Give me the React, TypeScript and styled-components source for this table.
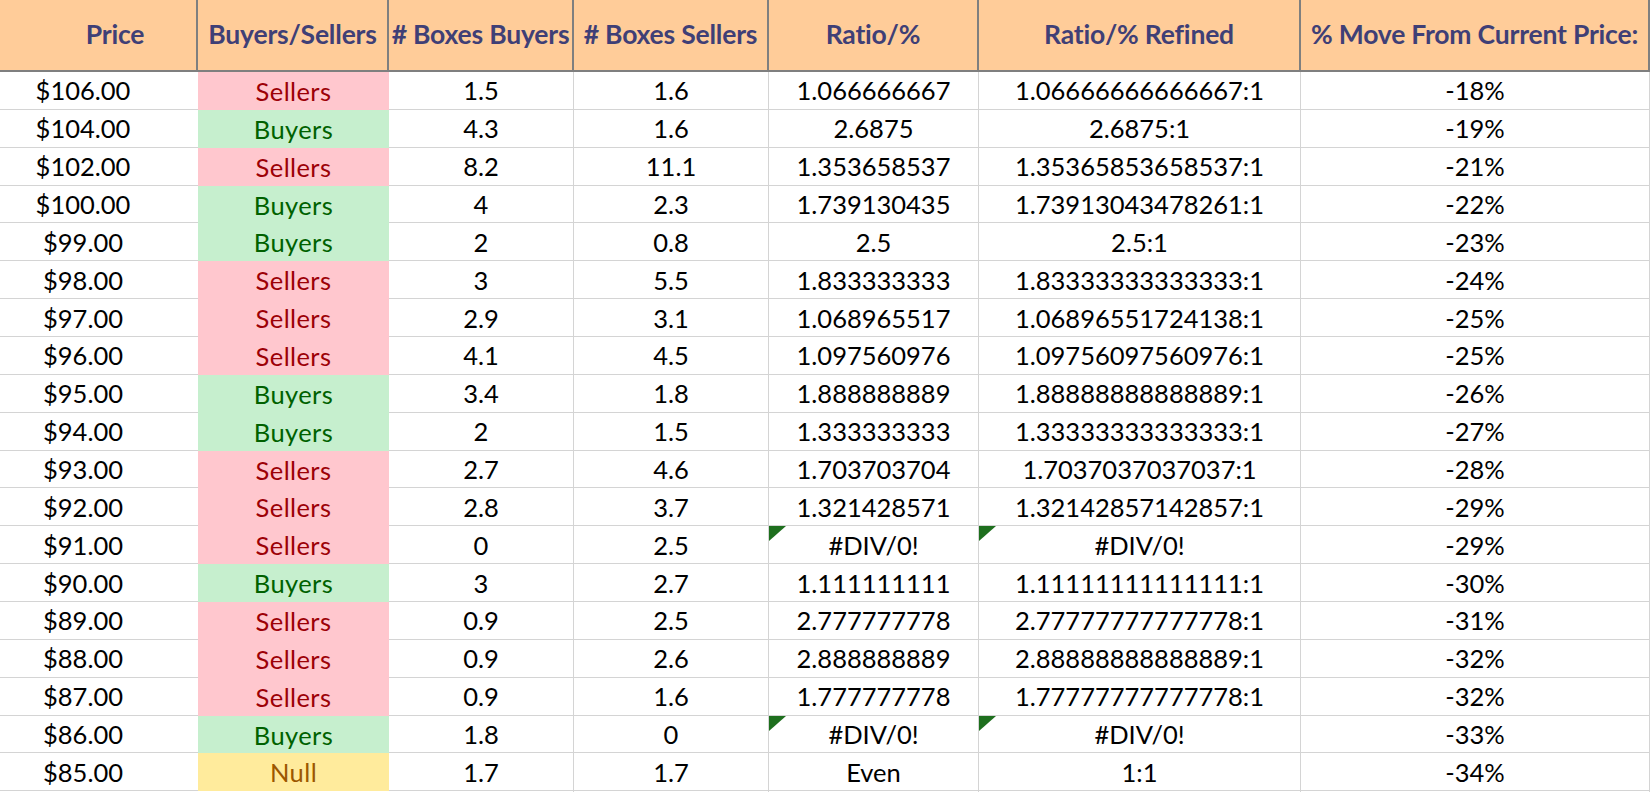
import React from "react";
import styled, { createGlobalStyle, css } from "styled-components";

const GlobalStyle = createGlobalStyle`
  html, body { margin: 0; padding: 0; background: #ffffff; }
  body { font-family: "Lato", "Noto Sans", sans-serif; overflow: hidden; }
`;

const COLS = "198px 191px 185px 195px 210px 322px 349px";

const Sheet = styled.div`
  width: 1650px;
  height: 792px;
  overflow: hidden;
  display: flex;
  flex-direction: column;
`;

const HeaderRow = styled.div`
  display: grid;
  grid-template-columns: ${COLS};
  height: 72px;
  background: #ffcc99;
  border-bottom: 2px solid #7f7f7f;
  box-sizing: border-box;
  flex: none;
`;

const HeaderCell = styled.div<{ $shift?: number }>`
  display: flex;
  align-items: center;
  justify-content: center;
  border-right: 2px solid #7f7f7f;
  box-sizing: border-box;
  color: #3f3f76;
  font-weight: 700;
  font-size: 26.5px;
  white-space: nowrap;
  letter-spacing: -0.2px;
  padding-bottom: 2px;
  padding-left: ${(p) => p.$shift ?? 0}px;
`;

const Body = styled.div`
  display: grid;
  grid-template-columns: ${COLS};
  grid-auto-rows: 37.87px;
`;

type Status = "Sellers" | "Buyers" | "Null";

const statusStyles: Record<Status, ReturnType<typeof css>> = {
  Sellers: css`background: #ffc7ce; color: #9c0006;`,
  Buyers: css`background: #c6efce; color: #006100;`,
  Null: css`background: #ffeb9c; color: #9c5700;`,
};

const Cell = styled.div<{ $noRight?: boolean; $padRight?: number }>`
  position: relative;
  display: flex;
  align-items: center;
  justify-content: center;
  box-sizing: border-box;
  border-bottom: 1px solid #d4d4d4;
  border-right: ${(p) => (p.$noRight ? "none" : "1px solid #d4d4d4")};
  padding-right: ${(p) => p.$padRight ?? 0}px;
  color: #000000;
  font-size: 25.5px;
  white-space: nowrap;
`;

const StatusCell = styled.div<{ $status: Status }>`
  display: flex;
  align-items: center;
  justify-content: center;
  box-sizing: border-box;
  font-size: 25.5px;
  letter-spacing: 0.4px;
  white-space: nowrap;
  ${(p) => statusStyles[p.$status]}
`;

const ErrorFlag = styled.span`
  position: absolute;
  top: 0;
  left: 0;
  width: 0;
  height: 0;
  border-top: 15px solid #1e6f1e;
  border-right: 17px solid transparent;
`;

type Row = [string, Status, string, string, string, string, string];

const rows: Row[] = [
  ["$106.00", "Sellers", "1.5", "1.6", "1.066666667", "1.06666666666667:1", "-18%"],
  ["$104.00", "Buyers", "4.3", "1.6", "2.6875", "2.6875:1", "-19%"],
  ["$102.00", "Sellers", "8.2", "11.1", "1.353658537", "1.35365853658537:1", "-21%"],
  ["$100.00", "Buyers", "4", "2.3", "1.739130435", "1.73913043478261:1", "-22%"],
  ["$99.00", "Buyers", "2", "0.8", "2.5", "2.5:1", "-23%"],
  ["$98.00", "Sellers", "3", "5.5", "1.833333333", "1.83333333333333:1", "-24%"],
  ["$97.00", "Sellers", "2.9", "3.1", "1.068965517", "1.06896551724138:1", "-25%"],
  ["$96.00", "Sellers", "4.1", "4.5", "1.097560976", "1.09756097560976:1", "-25%"],
  ["$95.00", "Buyers", "3.4", "1.8", "1.888888889", "1.88888888888889:1", "-26%"],
  ["$94.00", "Buyers", "2", "1.5", "1.333333333", "1.33333333333333:1", "-27%"],
  ["$93.00", "Sellers", "2.7", "4.6", "1.703703704", "1.7037037037037:1", "-28%"],
  ["$92.00", "Sellers", "2.8", "3.7", "1.321428571", "1.32142857142857:1", "-29%"],
  ["$91.00", "Sellers", "0", "2.5", "#DIV/0!", "#DIV/0!", "-29%"],
  ["$90.00", "Buyers", "3", "2.7", "1.111111111", "1.11111111111111:1", "-30%"],
  ["$89.00", "Sellers", "0.9", "2.5", "2.777777778", "2.77777777777778:1", "-31%"],
  ["$88.00", "Sellers", "0.9", "2.6", "2.888888889", "2.88888888888889:1", "-32%"],
  ["$87.00", "Sellers", "0.9", "1.6", "1.777777778", "1.77777777777778:1", "-32%"],
  ["$86.00", "Buyers", "1.8", "0", "#DIV/0!", "#DIV/0!", "-33%"],
  ["$85.00", "Null", "1.7", "1.7", "Even", "1:1", "-34%"],
];

const headers = [
  "Price",
  "Buyers/Sellers",
  "# Boxes Buyers",
  "# Boxes Sellers",
  "Ratio/%",
  "Ratio/% Refined",
  "% Move From Current Price:",
];

export default function App() {
  return (
    <>
      <GlobalStyle />
      <Sheet>
        <HeaderRow>
          {headers.map((h, i) => (
            <HeaderCell key={h} $shift={i === 0 ? 34 : 0}>
              {h}
            </HeaderCell>
          ))}
        </HeaderRow>
        <Body>
          {rows.map((r, i) => {
            const err = r[4].startsWith("#");
            return (
              <React.Fragment key={i}>
                <Cell $noRight $padRight={32}>
                  {r[0]}
                </Cell>
                <StatusCell $status={r[1]}>{r[1]}</StatusCell>
                <Cell>{r[2]}</Cell>
                <Cell>{r[3]}</Cell>
                <Cell>
                  {err && <ErrorFlag />}
                  {r[4]}
                </Cell>
                <Cell>
                  {err && <ErrorFlag />}
                  {r[5]}
                </Cell>
                <Cell>{r[6]}</Cell>
              </React.Fragment>
            );
          })}
          {Array.from({ length: 7 }).map((_, i) => (
            <Cell key={`e${i}`} $noRight={i < 2} />
          ))}
        </Body>
      </Sheet>
    </>
  );
}
